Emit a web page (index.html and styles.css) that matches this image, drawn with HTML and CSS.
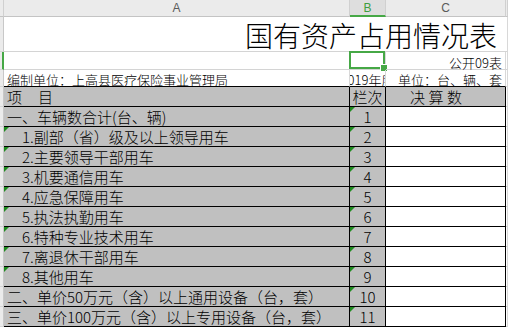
FILE: index.html
```html
<!DOCTYPE html>
<html lang="zh-CN">
<head>
<meta charset="utf-8">
<title>国有资产占用情况表</title>
<link rel="stylesheet" href="styles.css">
</head>
<body>
<div class="sheet">
  <div class="ch"></div>
  <div class="ch">A</div>
  <div class="ch sel">B</div>
  <div class="ch">C</div>
  <div class="ch"></div>

  <div class="rh"></div>
  <div class="c title">国有资产占用情况表</div>
  <div class="c"></div>

  <div class="rh on"></div>
  <div class="c noline"></div>
  <div class="c active"></div>
  <div class="c small right">公开09表</div>
  <div class="c"></div>

  <div class="rh"></div>
  <div class="c small unit top">编制单位：上高县医疗保险事业管理局</div>
  <div class="c small year top"><span>2019年度</span></div>
  <div class="c small right top">单位：台、辆、套</div>
  <div class="c"></div>

  <div class="rh"></div>
  <div class="c t a"><span>项</span><span class="gap">目</span></div>
  <div class="c t b">栏次</div>
  <div class="c t hd">决算数</div>
  <div class="c"></div>

  <div class="rh"></div>
  <div class="c t a">一、车辆数合计(台、辆)</div>
  <div class="c t b mk">1</div>
  <div class="c t v"></div>
  <div class="c"></div>

  <div class="rh"></div>
  <div class="c t a in mk">1.副部（省）级及以上领导用车</div>
  <div class="c t b mk">2</div>
  <div class="c t v"></div>
  <div class="c"></div>

  <div class="rh"></div>
  <div class="c t a in mk">2.主要领导干部用车</div>
  <div class="c t b mk">3</div>
  <div class="c t v"></div>
  <div class="c"></div>

  <div class="rh"></div>
  <div class="c t a in mk">3.机要通信用车</div>
  <div class="c t b mk">4</div>
  <div class="c t v"></div>
  <div class="c"></div>

  <div class="rh"></div>
  <div class="c t a in mk">4.应急保障用车</div>
  <div class="c t b mk">5</div>
  <div class="c t v"></div>
  <div class="c"></div>

  <div class="rh"></div>
  <div class="c t a in mk">5.执法执勤用车</div>
  <div class="c t b mk">6</div>
  <div class="c t v"></div>
  <div class="c"></div>

  <div class="rh"></div>
  <div class="c t a in mk">6.特种专业技术用车</div>
  <div class="c t b mk">7</div>
  <div class="c t v"></div>
  <div class="c"></div>

  <div class="rh"></div>
  <div class="c t a in mk">7.离退休干部用车</div>
  <div class="c t b mk">8</div>
  <div class="c t v"></div>
  <div class="c"></div>

  <div class="rh"></div>
  <div class="c t a in mk">8.其他用车</div>
  <div class="c t b mk">9</div>
  <div class="c t v"></div>
  <div class="c"></div>

  <div class="rh"></div>
  <div class="c t a">二、单价50万元（含）以上通用设备（台，套）</div>
  <div class="c t b mk">10</div>
  <div class="c t v"></div>
  <div class="c"></div>

  <div class="rh"></div>
  <div class="c t a">三、单价100万元（含）以上专用设备（台，套）</div>
  <div class="c t b mk">11</div>
  <div class="c t v"></div>
  <div class="c"></div>
</div>
</body>
</html>
```
FILE: styles.css
```css
* { box-sizing: border-box; }
html, body { margin: 0; padding: 0; }
body {
  width: 508px;
  height: 327px;
  overflow: hidden;
  background: #fff;
  color: #000;
  font-family: "Noto Sans CJK SC", "Noto Sans", sans-serif;
  font-weight: 300;
}
.sheet {
  display: grid;
  grid-template-columns: 4px 346px 36px 120px 2px;
  grid-template-rows: 17px 35px 18px 17px repeat(12, 20px);
}
.ch {
  background: #ebebeb;
  border-right: 1px solid #d0d0d0;
  border-bottom: 1px solid #c4c4c4;
  font: 12px "Liberation Sans", Arial, sans-serif;
  color: #5a5a5a;
  display: flex;
  align-items: center;
  justify-content: center;
}
.ch.sel {
  background: #dedede;
  color: #3e9e3e;
  border-bottom: 2px solid #46a846;
}
.rh {
  background: #ebebeb;
  border-right: 1px solid #c8c8c8;
  border-bottom: 1px solid #d6d6d6;
}
.rh.on { border-right: 2px solid #46a846; }
.c {
  position: relative;
  display: flex;
  align-items: flex-end;
  white-space: nowrap;
  line-height: 1;
  border-right: 1px solid #d8d8d8;
  border-bottom: 1px solid #d4d4d4;
}
.noline { border-right-color: transparent; }
.title {
  grid-column: 2 / 5;
  justify-content: flex-end;
  font-size: 28px;
  padding: 0 9px 2px 0;
  border-right: none;
}
.small { font-size: 13px; }
.right { justify-content: flex-end; padding-right: 3px; }
.unit { padding-left: 3px; }
.top { border-bottom-color: #000; }
.year { justify-content: center; overflow: hidden; }
.active {
  box-shadow: inset 0 0 0 2px #46a846;
  margin: -1px 0 0 -1px;
}
.active::after {
  content: "";
  position: absolute;
  right: -3px;
  bottom: -3px;
  width: 6px;
  height: 6px;
  background: #46a846;
  border: 1px solid #fff;
}
.t {
  font-size: 15px;
  padding-bottom: 2px;
  background: #c0c0c0;
  border-right-color: #000;
  border-bottom-color: #000;
}
.a { padding-left: 3px; }
.a.in { padding-left: 18px; }
.gap { margin-left: 16px; }
.b { justify-content: center; }
.hd { padding-left: 24px; letter-spacing: 3.5px; }
.v { background: #fff; }
.mk::before {
  content: "";
  position: absolute;
  left: 0;
  top: 0;
  border-top: 5px solid #1f8c1f;
  border-right: 5px solid transparent;
}
```
